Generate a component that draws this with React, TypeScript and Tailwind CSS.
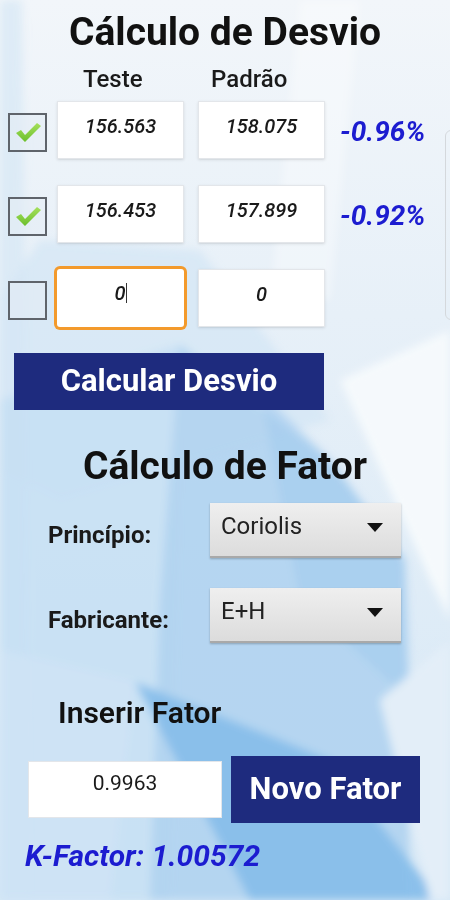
import { useState } from "react"

const font = { fontFamily: "Roboto, 'Liberation Sans', sans-serif" }

function Background() {
  return (
    <svg className="absolute inset-0" width="450" height="900" viewBox="0 0 450 900" preserveAspectRatio="none">
      <defs>
        <linearGradient id="base" x1="0" y1="0" x2="0" y2="1">
          <stop offset="0" stopColor="#f2f6fa" />
          <stop offset="0.35" stopColor="#e7f0f8" />
          <stop offset="1" stopColor="#d6e8f6" />
        </linearGradient>
        <filter id="soft">
          <feGaussianBlur stdDeviation="4" />
        </filter>
      </defs>
      <rect width="450" height="900" fill="url(#base)" />
      <g filter="url(#soft)">
        <polygon points="0,0 22,0 30,900 0,900" fill="#d6e7f5" opacity="0.7" />
        <polygon points="40,240 200,250 330,420 60,500 0,470 0,300" fill="#d3e6f5" opacity="0.7" />
        <polygon points="0,400 180,345 170,900 0,900" fill="#c6dff3" opacity="0.85" />
        <polygon points="180,345 330,460 405,560 410,900 150,900 160,600" fill="#b0d3f0" opacity="0.9" />
        <polygon points="260,390 330,460 405,560 410,700 300,600" fill="#a3cbee" opacity="0.6" />
        <polygon points="340,380 450,330 450,620 430,580" fill="#f5f9fc" />
        <polygon points="135,682 330,760 440,900 250,900" fill="#88beea" opacity="0.95" />
        <polygon points="0,650 135,682 110,900 0,900" fill="#cfe4f5" opacity="0.8" />
        <polygon points="380,700 450,640 450,900 430,900" fill="#e3eef8" />
        <polygon points="300,0 360,0 330,300 270,300" fill="#ffffff" opacity="0.35" />
      </g>
    </svg>
  )
}

function Check({ checked }: { checked: boolean }) {
  return (
    <div className="w-[39px] h-[39px] border-2 border-[#5f646b] bg-[#e4edf5]/60 flex items-center justify-center mt-1 shrink-0">
      {checked && (
        <svg width="30" height="26" viewBox="0 0 30 26">
          <defs>
            <linearGradient id="gck" x1="0" y1="0" x2="0" y2="1">
              <stop offset="0" stopColor="#a6e05c" />
              <stop offset="1" stopColor="#6bbf2c" />
            </linearGradient>
          </defs>
          <path d="M3 14 L8 11 L12 16 L24 4 L28 7 L12 23 Z" fill="url(#gck)" />
        </svg>
      )}
    </div>
  )
}

function Field({ value, focused }: { value: string; focused?: boolean }) {
  return (
    <div
      className={
        focused
          ? "w-[127px] h-[58px] shrink-0 bg-white rounded-[3px] ring-[3px] ring-[#f39a2c] pt-[12px] text-center"
          : "w-[127px] h-[58px] shrink-0 bg-white border border-[#e3e6ea] shadow-sm pt-[12px] text-center"
      }
    >
      <span className="text-[20px] leading-[24px] italic font-medium text-[#1a1a1a]">
        {value}
        {focused && <span className="inline-block w-px h-[20px] bg-[#333] align-[-3px]" />}
      </span>
    </div>
  )
}

function Row({ checked, a, b, pct, focused }: { checked: boolean; a: string; b: string; pct?: string; focused?: boolean }) {
  return (
    <div className="flex items-center pl-[8px]">
      <Check checked={checked} />
      <div className="ml-[10px]">
        <Field value={a} focused={focused} />
      </div>
      <div className="ml-[14px]">
        <Field value={b} />
      </div>
      {pct && <span className="ml-[15px] mt-1 text-[28px] font-bold italic text-[#1c1cd0]">{pct}</span>}
    </div>
  )
}

function Select({ value }: { value: string }) {
  return (
    <div className="w-[191px] h-[55px] flex items-center justify-between pl-[11px] pr-[18px] bg-gradient-to-b from-[#efefef] to-[#dcdcdc] border-b-2 border-[#a9a9a9] shadow-[0_1px_2px_rgba(0,0,0,0.25)]">
      <span className="text-[24px] text-[#222] -mt-2">{value}</span>
      <svg width="16" height="9" viewBox="0 0 16 9" className="-mt-1">
        <polygon points="0,0 16,0 8,9" fill="#111" />
      </svg>
    </div>
  )
}

export default function App() {
  const [rows] = useState([
    { checked: true, a: "156.563", b: "158.075", pct: "-0.96%" },
    { checked: true, a: "156.453", b: "157.899", pct: "-0.92%" },
  ])

  return (
    <div className="relative w-[450px] h-[900px] overflow-hidden" style={font}>
      <Background />
      <div className="absolute left-[445px] top-[130px] w-[12px] h-[190px] border border-[#d4d8dc] rounded-l-[6px]" />

      <div className="relative flex flex-col">
        <h1 className="mt-[11px] text-center text-[39px] leading-[42px] font-bold text-[#111]">Cálculo de Desvio</h1>

        <div className="mt-[12px] flex pl-[83px] text-[24px] leading-[28px] font-medium text-[#1a1a1a]">
          <span className="w-[128px]">Teste</span>
          <span>Padrão</span>
        </div>

        <div className="mt-[8px] flex flex-col gap-[26px]">
          {rows.map((r) => (
            <Row key={r.a} checked={r.checked} a={r.a} b={r.b} pct={r.pct} />
          ))}
          <Row checked={false} a="0" b="0" focused />
        </div>

        <button className="mt-[26px] ml-[14px] w-[310px] h-[57px] bg-[#1e2b7e] text-white text-[31px] font-bold">
          Calcular Desvio
        </button>

        <h2 className="mt-[33px] text-center text-[39px] leading-[46px] font-bold text-[#111]">Cálculo de Fator</h2>

        <div className="mt-[14px] flex items-center">
          <span className="pl-[48px] w-[210px] text-[24px] font-bold text-[#1a1a1a] mt-2">Princípio:</span>
          <Select value="Coriolis" />
        </div>

        <div className="mt-[30px] flex items-center">
          <span className="pl-[48px] w-[210px] text-[24px] font-bold text-[#1a1a1a] mt-2">Fabricante:</span>
          <Select value="E+H" />
        </div>

        <h3 className="mt-[53px] pl-[58px] text-[30px] leading-[33px] font-semibold text-[#111]">Inserir Fator</h3>

        <div className="mt-[27px] flex items-center">
          <div className="ml-[28px] w-[194px] h-[57px] bg-white border border-[#e3e6ea] pt-[9px] text-center">
            <span className="text-[21px] leading-[24px] text-[#1a1a1a]">0.9963</span>
          </div>
          <button className="ml-[9px] w-[189px] h-[67px] bg-[#1e2b7e] text-white text-[31px] font-bold">
            Novo Fator
          </button>
        </div>

        <p className="mt-[15px] pl-[25px] text-[30px] leading-[35px] font-bold italic text-[#1c1cd0]">K-Factor: 1.00572</p>
      </div>
    </div>
  )
}
